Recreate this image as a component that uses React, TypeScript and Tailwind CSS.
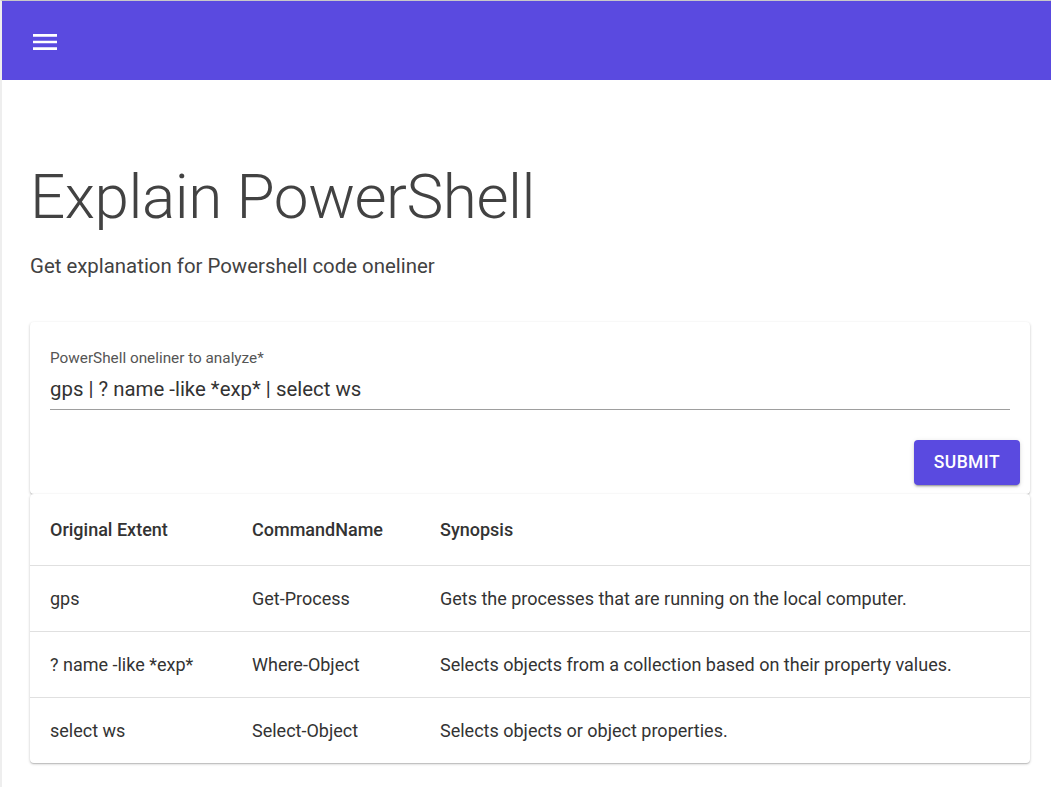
const rows = [
  { extent: 'gps', command: 'Get-Process', synopsis: 'Gets the processes that are running on the local computer.' },
  { extent: '? name -like *exp*', command: 'Where-Object', synopsis: 'Selects objects from a collection based on their property values.' },
  { extent: 'select ws', command: 'Select-Object', synopsis: 'Selects objects or object properties.' },
];

export default function App() {
  return (
    <div
      className="min-h-[787px] bg-white border-t border-[#c8c8c8] border-l-2 border-l-[#eeeeee]"
      style={{ fontFamily: 'Roboto, "Noto Sans", sans-serif' }}
    >
      {/* App bar */}
      <header className="h-[79px] bg-[#5a4ae0] flex items-center pl-[27px]">
        <svg width="32" height="32" viewBox="0 0 24 24" fill="white" className="mt-[2px]">
          <path d="M3 18h18v-2H3v2zm0-5h18v-2H3v2zm0-7v2h18V6H3z" />
        </svg>
      </header>

      <main className="px-[28px] pt-[86px]">
        <h1 className="text-[62px] font-light text-[#424242] leading-none tracking-[-0.45px]">
          Explain PowerShell
        </h1>
        <p className="mt-[28px] text-[20.4px] text-[#424242] leading-[20px]">
          Get explanation for Powershell code oneliner
        </p>

        {/* Input card */}
        <section className="mt-[46px] w-[1000px] rounded-[4px] bg-white shadow-[0_1px_3px_rgba(0,0,0,0.2),0_1px_1px_rgba(0,0,0,0.14)] px-[20px] pt-[29px] pb-[9px]">
          <label className="block text-[15.3px] text-[#555] leading-[15px]">PowerShell oneliner to analyze*</label>
          <div className="mt-[13px] border-b border-[#9e9e9e] pb-[10px] text-[20.4px] text-[#333] leading-[20px]">
            gps | ? name -like *exp* | select ws
          </div>
          <div className="flex justify-end mt-[30px] -mr-[10px]">
            <button className="h-[45px] px-[20px] rounded-[4px] bg-[#5a4ae0] text-white text-[17.5px] font-medium tracking-[0.4px] shadow-[0_3px_1px_-2px_rgba(0,0,0,0.2),0_2px_2px_rgba(0,0,0,0.14),0_1px_5px_rgba(0,0,0,0.12)]">
              SUBMIT
            </button>
          </div>
        </section>

        {/* Results table */}
        <section className="w-[1000px] rounded-[4px] bg-white shadow-[0_1px_3px_rgba(0,0,0,0.2),0_1px_1px_rgba(0,0,0,0.14)]">
          <table className="w-full text-left text-[18px] text-[#333]">
            <thead>
              <tr className="h-[71px] border-b border-[#e0e0e0]">
                <th className="pl-[20px] w-[222px] font-medium">Original Extent</th>
                <th className="w-[188px] font-medium">CommandName</th>
                <th className="font-medium">Synopsis</th>
              </tr>
            </thead>
            <tbody>
              {rows.map((r, i) => (
                <tr key={r.command} className={`h-[66px] ${i < rows.length - 1 ? 'border-b border-[#e0e0e0]' : ''}`}>
                  <td className="pl-[20px]">{r.extent}</td>
                  <td>{r.command}</td>
                  <td>{r.synopsis}</td>
                </tr>
              ))}
            </tbody>
          </table>
        </section>
      </main>
    </div>
  );
}
